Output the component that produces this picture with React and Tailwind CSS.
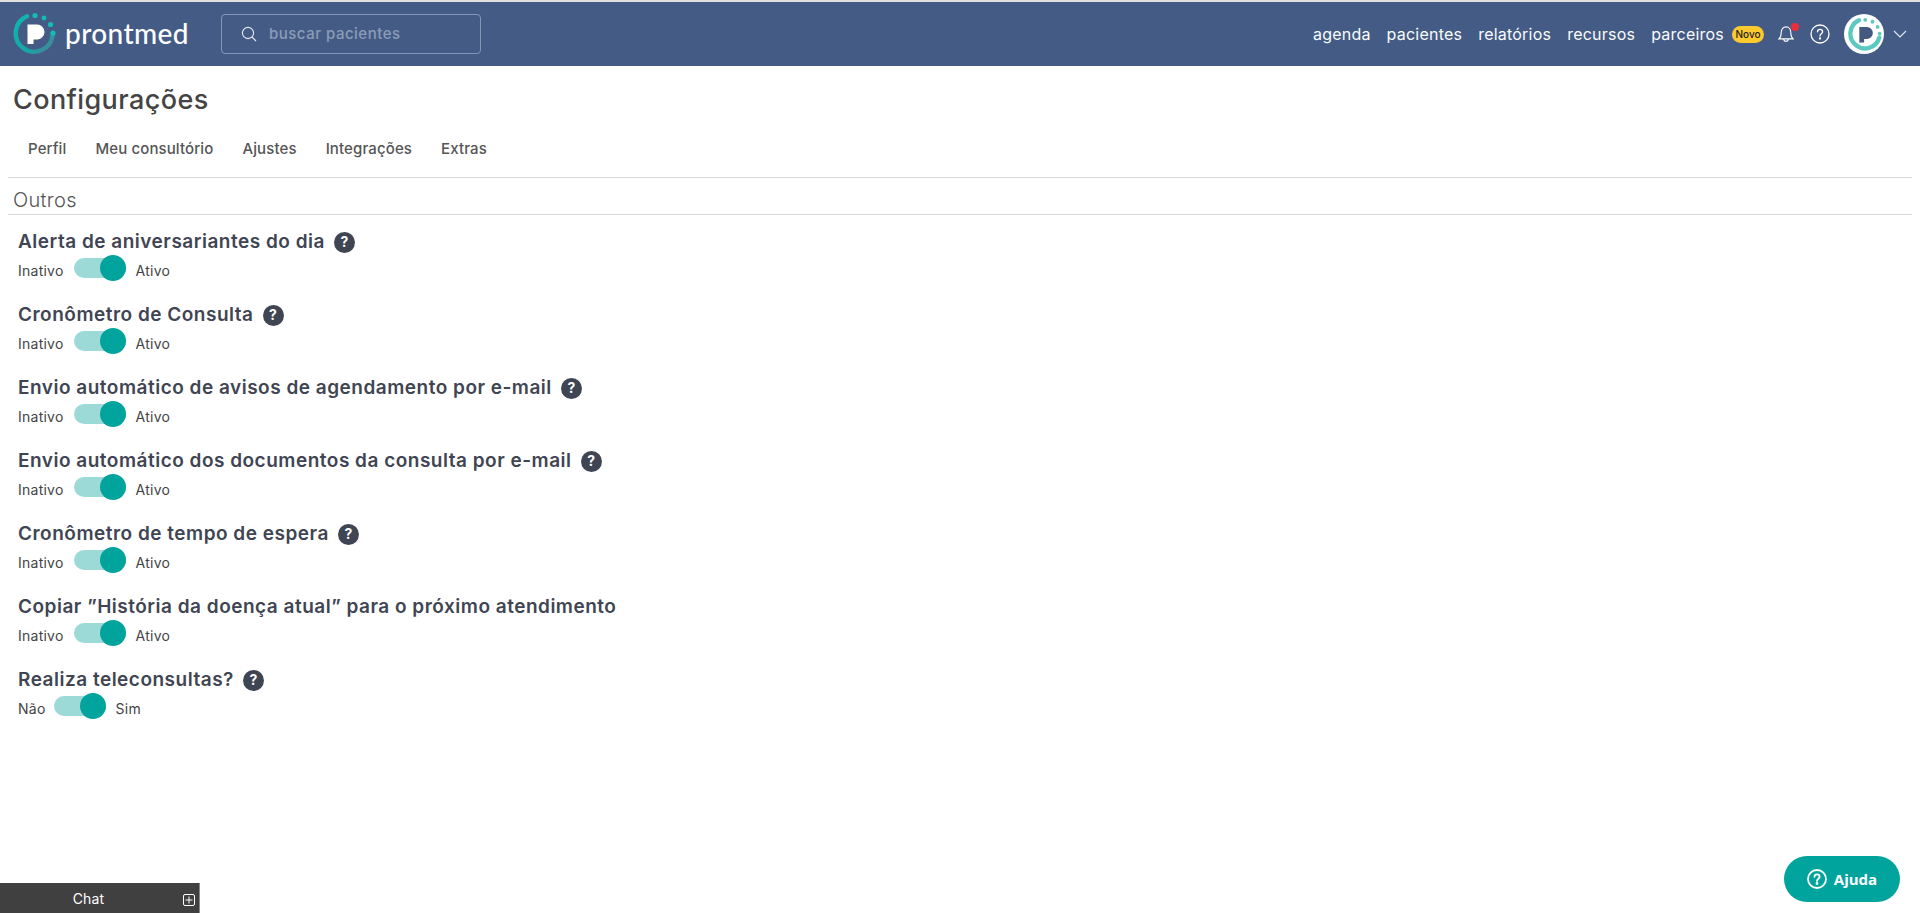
import React from "react";

function Logo() {
  return (
    <svg width="44" height="44" viewBox="0 0 44 44" className="shrink-0">
      <defs>
        <linearGradient id="lg" x1="0" y1="0" x2="1" y2="1">
          <stop offset="0" stopColor="#12b5b0" />
          <stop offset="0.6" stopColor="#12a9a4" />
          <stop offset="1" stopColor="#4f7f96" />
        </linearGradient>
      </defs>
      <path d="M15 4.2 A18.5 18.5 0 1 0 40.6 23.5" fill="none" stroke="url(#lg)" strokeWidth="4.4" strokeLinecap="round" />
      <circle cx="23" cy="3.5" r="2.6" fill="#12bdb5" />
      <circle cx="32" cy="6" r="2.4" fill="#12bdb5" />
      <circle cx="38.5" cy="12.5" r="2.6" fill="#12bdb5" />
      <circle cx="41" cy="21" r="2.6" fill="#12bdb5" />
      <path d="M15.5 12.5 H25 A7.5 7.5 0 0 1 25 27.5 H21.5 V32 H15.5 Z" fill="#fff" />
    </svg>
  );
}

function Avatar() {
  return (
    <div className="w-10 h-10 rounded-full bg-white flex items-center justify-center shrink-0">
      <svg width="35" height="35" viewBox="0 0 44 44">
        <path d="M15 4.2 A18.5 18.5 0 1 0 40.6 26" fill="none" stroke="#5cc9c0" strokeWidth="5.5" strokeLinecap="round" />
        <circle cx="23" cy="3.5" r="2.4" fill="#5cc9c0" />
        <circle cx="32" cy="6" r="2.4" fill="#5cc9c0" />
        <circle cx="38.5" cy="12.5" r="2.4" fill="#5cc9c0" />
        <circle cx="41" cy="21" r="2.4" fill="#5cc9c0" />
        <path d="M15.5 12.5 H25 A7.5 7.5 0 0 1 25 27.5 H21.5 V32 H15.5 Z" fill="#43597f" />
      </svg>
    </div>
  );
}

function Item({ title, help = true, off = "Inativo", on = "Ativo", narrow = false }) {
  return (
    <div className="h-[73px] pl-[10px]">
      <div className="flex items-center h-[26px] gap-[9px]">
        <span className="text-[19px] font-semibold text-[#3f4553] leading-[26px] tracking-[0.5px] whitespace-nowrap">{title}</span>
        {help && (
          <span className="w-[21px] h-[21px] rounded-full bg-[#3f4553] text-white text-[14px] font-bold flex items-center justify-center leading-none">?</span>
        )}
      </div>
      <div className="flex items-center h-[26px] text-[14px] text-[#444] tracking-[0.25px]">
        <span className="pt-[4px]">{off}</span>
        <span className={narrow ? "relative w-[52px] h-[20px] ml-[8px] mr-[10px] rounded-full bg-[#9bdad6] shrink-0" : "relative w-[52px] h-[20px] ml-[10px] mr-[10px] rounded-full bg-[#9bdad6] shrink-0"}>
          <span className="absolute right-0 top-[-3px] w-[26px] h-[26px] rounded-full bg-[#00a49c]" />
        </span>
        <span className="pt-[4px]">{on}</span>
      </div>
    </div>
  );
}

export default function App() {
  return (
    <div className="relative w-[1920px] h-[913px] overflow-hidden bg-white text-[#444] flex flex-col" style={{ fontFamily: "Inter, 'Liberation Sans', sans-serif" }}>
      <header className="h-[66px] shrink-0 bg-[#445c85] border-t-2 border-[#e1e1e1] flex items-center text-white">
        <div className="flex items-center pl-[12px] w-[221px] gap-[9px]">
          <Logo />
          <span className="text-[28px] leading-none tracking-[0.4px] font-medium pb-[3px]" style={{ fontFamily: "Lato, sans-serif" }}>prontmed</span>
        </div>
        <div className="w-[260px] h-[40px] border border-[#8496b3] rounded-[4px] flex items-center pl-[19px] gap-[12px]">
          <svg width="16" height="16" viewBox="0 0 16 16" fill="none" stroke="#e7ebf1" strokeWidth="1.1">
            <circle cx="7" cy="7" r="5.6" />
            <path d="M11 11 L15 15" />
          </svg>
          <span className="text-[15px] text-[#8c9cb8] font-medium tracking-[0.5px]">buscar pacientes</span>
        </div>
        <div className="ml-auto flex items-center pr-[13px]">
          <nav className="flex items-center gap-[16px] text-[16px] text-[#fafbfc] tracking-[0.22px]">
            <span>agenda</span>
            <span>pacientes</span>
            <span>relatórios</span>
            <span>recursos</span>
            <span>parceiros</span>
          </nav>
          <span className="ml-[8px] h-[17px] w-[32px] rounded-full bg-[#fcc92e] text-[#222] text-[10px] font-medium flex items-center justify-center">Novo</span>
          <span className="relative ml-[14px] w-[16px] h-[18px] block">
            <svg width="16" height="18" viewBox="0 0 18 20" fill="none" stroke="#fff" strokeWidth="1.2" className="absolute top-0 left-0">
              <path d="M1 15.5 C3 14 3.6 12 3.6 8.5 C3.6 4.5 6 2 9 2 C12 2 14.4 4.5 14.4 8.5 C14.4 12 15 14 17 15.5 Z" />
              <path d="M6.5 15.5 C6.5 19 11.5 19 11.5 15.5" />
            </svg>
            <span className="absolute top-[-2px] right-[-5px] w-[8px] h-[8px] rounded-full bg-[#ea2f3c]" />
          </span>
          <svg width="20" height="20" viewBox="0 0 20 20" fill="none" stroke="#fff" strokeWidth="1.3" className="ml-[16px]">
            <circle cx="10" cy="10" r="9" />
            <path d="M7.5 7.8 C7.5 4.6 12.6 4.6 12.6 7.8 C12.6 9.8 10 9.8 10 12" strokeLinecap="round" />
            <circle cx="10" cy="14.5" r="0.5" fill="#fff" />
          </svg>
          <span className="ml-[14px]"><Avatar /></span>
          <svg width="14" height="8" viewBox="0 0 14 8" fill="none" stroke="#e8ecf2" strokeWidth="1.1" className="ml-[9px]">
            <path d="M1 1 L7 7 L13 1" />
          </svg>
        </div>
      </header>

      <main className="flex-1 flex flex-col pl-[8px] pr-[8px]">
        <h1 className="pl-[5px] pt-[17px] h-[53px] text-[27px] leading-[34px] font-medium text-[#444] tracking-[0.4px]">Configurações</h1>
        <div className="h-[59px] border-b border-[#d9d9d9] flex items-center pl-[20px] pt-[3px] gap-[29px] text-[15px] font-medium text-[#555] tracking-[0.12px]">
          <span>Perfil</span>
          <span>Meu consultório</span>
          <span>Ajustes</span>
          <span>Integrações</span>
          <span>Extras</span>
        </div>
        <div className="h-[37px] border-b border-[#d9d9d9] pl-[5px] flex items-end text-[20px] text-[#555] leading-[28px] font-light tracking-[0.3px]">Outros</div>
        <div className="pt-[14px]">
          <Item title="Alerta de aniversariantes do dia" />
          <Item title="Cronômetro de Consulta" />
          <Item title="Envio automático de avisos de agendamento por e-mail" />
          <Item title="Envio automático dos documentos da consulta por e-mail" />
          <Item title="Cronômetro de tempo de espera" />
          <Item title="Copiar ”História da doença atual” para o próximo atendimento" help={false} />
          <Item title="Realiza teleconsultas?" off="Não" on="Sim" narrow />
        </div>
      </main>

      <div className="absolute left-0 bottom-0 w-[200px] h-[30px] bg-[#404040] border-r border-[#888] flex items-center justify-center pr-[22px] text-white text-[14px] tracking-[0.2px]">
        Chat
        <svg width="12" height="12" viewBox="0 0 12 12" fill="none" stroke="#fff" strokeWidth="1" className="absolute left-[183px] top-[11px]">
          <rect x="0.5" y="0.5" width="11" height="11" rx="1.5" />
          <path d="M6 2.5 V9.5 M2.5 6 H9.5" />
        </svg>
      </div>

      <button className="absolute left-[1784px] top-[856px] w-[116px] h-[46px] rounded-full bg-[#00a49c] text-white flex items-center justify-center gap-[7px] font-bold text-[15px]" style={{ fontFamily: "'Open Sans', sans-serif" }}>
        <svg width="20" height="20" viewBox="0 0 20 20" fill="none" stroke="#fff" strokeWidth="1.8">
          <circle cx="10" cy="10" r="9" />
          <path d="M7.5 7.8 C7.5 4.6 12.6 4.6 12.6 7.8 C12.6 9.8 10 9.8 10 12" strokeLinecap="round" />
          <circle cx="10" cy="14.5" r="0.5" fill="#fff" />
        </svg>
        Ajuda
      </button>
    </div>
  );
}
